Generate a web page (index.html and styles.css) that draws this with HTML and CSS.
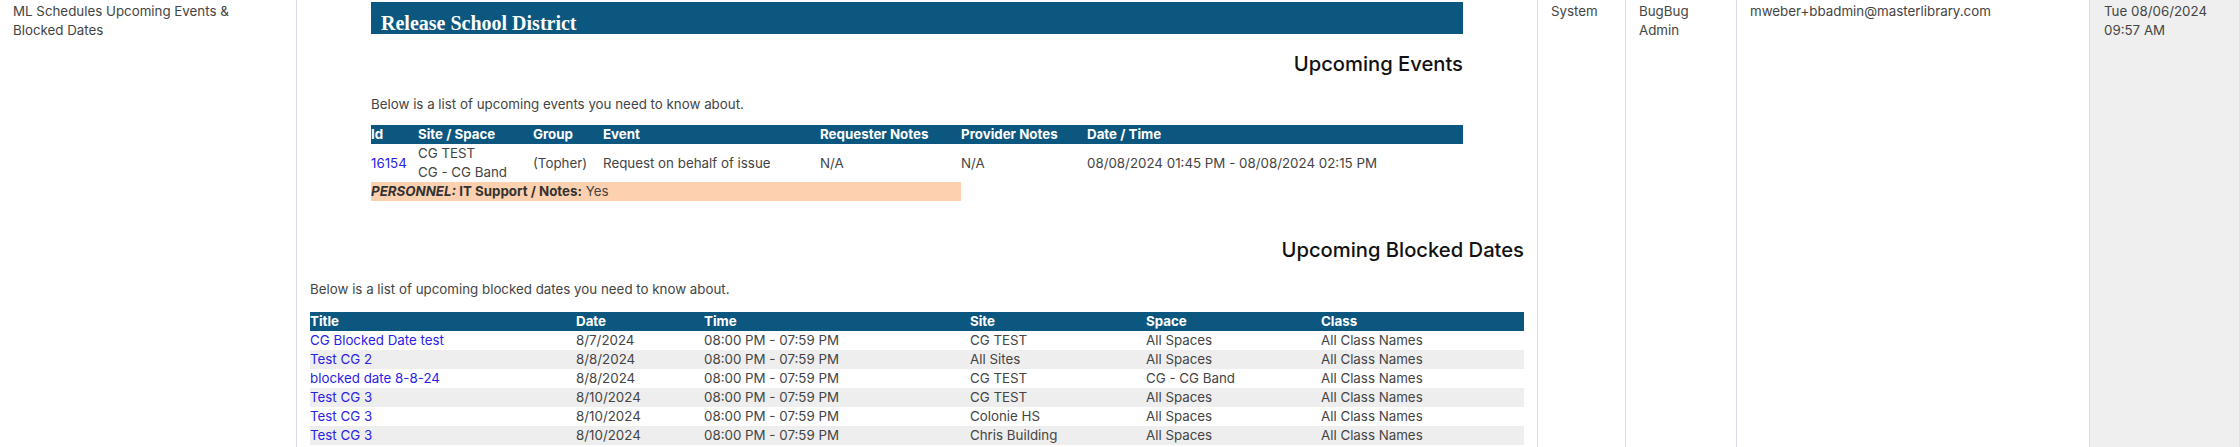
FILE: index.html
```html
<!DOCTYPE html>
<html lang="en">
<head>
<meta charset="utf-8">
<title>Message log</title>
<link rel="stylesheet" href="styles.css">
</head>
<body>
<div class="log-row">
  <div class="cell subj"><span class="subj-text">ML Schedules Upcoming Events &amp; Blocked Dates</span></div>
  <div class="cell body">
    <div class="evt-wrap">
      <div class="banner">Release School District</div>
      <h2 class="sec-title">Upcoming Events</h2>
      <p class="intro">Below is a list of upcoming events you need to know about.</p>
      <table class="data evt">
        <colgroup>
          <col class="e1"><col class="e2"><col class="e3"><col class="e4"><col class="e5"><col class="e6"><col>
        </colgroup>
        <thead>
          <tr><th>Id</th><th>Site / Space</th><th>Group</th><th>Event</th><th>Requester Notes</th><th>Provider Notes</th><th>Date / Time</th></tr>
        </thead>
        <tbody>
          <tr>
            <td><a class="lnk" href="#">16154</a></td>
            <td>CG TEST<br>CG - CG Band</td>
            <td>(Topher)</td>
            <td>Request on behalf of issue</td>
            <td>N/A</td>
            <td>N/A</td>
            <td>08/08/2024 01:45 PM - 08/08/2024 02:15 PM</td>
          </tr>
          <tr>
            <td colspan="5" class="personnel"><b><i>PERSONNEL:</i> IT Support / Notes:</b> Yes</td>
            <td></td><td></td>
          </tr>
        </tbody>
      </table>
    </div>
    <h2 class="sec-title blk-title">Upcoming Blocked Dates</h2>
    <p class="intro">Below is a list of upcoming blocked dates you need to know about.</p>
    <table class="data blk">
      <colgroup>
        <col class="b1"><col class="b2"><col class="b3"><col class="b4"><col class="b5"><col>
      </colgroup>
      <thead>
        <tr><th>Title</th><th>Date</th><th>Time</th><th>Site</th><th>Space</th><th>Class</th></tr>
      </thead>
      <tbody>
        <tr><td><a class="lnk" href="#">CG Blocked Date test</a></td><td>8/7/2024</td><td>08:00 PM - 07:59 PM</td><td>CG TEST</td><td>All Spaces</td><td>All Class Names</td></tr>
        <tr><td><a class="lnk" href="#">Test CG 2</a></td><td>8/8/2024</td><td>08:00 PM - 07:59 PM</td><td>All Sites</td><td>All Spaces</td><td>All Class Names</td></tr>
        <tr><td><a class="lnk" href="#">blocked date 8-8-24</a></td><td>8/8/2024</td><td>08:00 PM - 07:59 PM</td><td>CG TEST</td><td>CG - CG Band</td><td>All Class Names</td></tr>
        <tr><td><a class="lnk" href="#">Test CG 3</a></td><td>8/10/2024</td><td>08:00 PM - 07:59 PM</td><td>CG TEST</td><td>All Spaces</td><td>All Class Names</td></tr>
        <tr><td><a class="lnk" href="#">Test CG 3</a></td><td>8/10/2024</td><td>08:00 PM - 07:59 PM</td><td>Colonie HS</td><td>All Spaces</td><td>All Class Names</td></tr>
        <tr><td><a class="lnk" href="#">Test CG 3</a></td><td>8/10/2024</td><td>08:00 PM - 07:59 PM</td><td>Chris Building</td><td>All Spaces</td><td>All Class Names</td></tr>
      </tbody>
    </table>
  </div>
  <div class="cell from">System</div>
  <div class="cell user">BugBug Admin</div>
  <div class="cell email">mweber+bbadmin@masterlibrary.com</div>
  <div class="cell date">Tue 08/06/2024 09:57 AM</div>
</div>
</body>
</html>
```
FILE: styles.css
```css
html, body {
  margin: 0;
  padding: 0;
  background: #ffffff;
  overflow: hidden;
}
body {
  font-family: Inter, "Noto Sans", sans-serif;
  font-size: 13.33px;
  line-height: 19px;
  color: #444444;
}
.log-row {
  display: grid;
  grid-template-columns: 296px 1241px 88px 111px 353px 151px;
  min-height: 460px;
}
.cell {
  box-sizing: border-box;
  padding: 2px 13px 0 13px;
  border-left: 1px solid #d8dfe7;
}
.cell.subj {
  border-left: none;
  padding-right: 40px;
}
.cell.body {
  padding-bottom: 40px;
}
.cell.date {
  background: #efefef;
  padding-left: 14px;
  border-right: 1px solid #e2e2e2;
}
.evt-wrap {
  width: 1092px;
  margin: 0 auto;
}
.banner {
  background: #0b5780;
  color: #ffffff;
  font-family: "Liberation Serif", "Times New Roman", serif;
  font-weight: bold;
  font-size: 20px;
  line-height: 20px;
  padding: 11px 10px 1px;
}
.sec-title {
  margin: 18px 0 0;
  font-size: 20.2px;
  line-height: 24px;
  font-weight: 500;
  color: #111111;
  text-align: right;
}
.blk-title {
  margin-top: 37px;
}
.intro {
  margin: 19px 0 0;
}
.blk-title + .intro {
  margin-top: 18px;
}
.data {
  width: 100%;
  border-collapse: collapse;
  table-layout: fixed;
  margin-top: 11px;
}
.data.blk {
  margin-top: 13px;
}
.data th,
.data td {
  padding: 0;
  text-align: left;
  vertical-align: middle;
  white-space: nowrap;
  line-height: 19px;
}
.data th {
  background: #0b5780;
  color: #ffffff;
  font-weight: 700;
}
.e1 { width: 47px; }
.e2 { width: 115px; }
.e3 { width: 70px; }
.e4 { width: 217px; }
.e5 { width: 141px; }
.e6 { width: 126px; }
.b1 { width: 266px; }
.b2 { width: 128px; }
.b3 { width: 266px; }
.b4 { width: 176px; }
.b5 { width: 175px; }
.personnel {
  background: #fdd1af;
}
.personnel b {
  color: #333333;
}
.blk tbody tr:nth-child(even) td {
  background: #eeeeee;
}
.lnk {
  color: #2a22e6;
  text-decoration: none;
}
```
